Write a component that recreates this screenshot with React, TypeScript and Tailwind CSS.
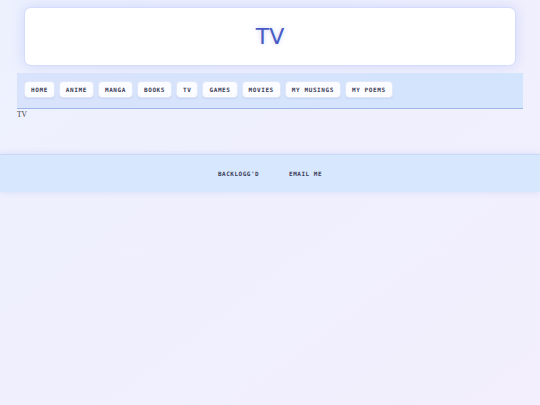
import React from "react";

const links = ["HOME", "ANIME", "MANGA", "BOOKS", "TV", "GAMES", "MOVIES", "MY MUSINGS", "MY POEMS"];

export default function App() {
  return (
    <div className="min-h-screen w-full bg-gradient-to-br from-[#edf1fe] to-[#f3effd]">
      <div className="mx-auto w-[506px] pt-[7px]">
        <header className="mx-[7px] flex h-[59px] items-center justify-center rounded-[7px] border border-[#d3dcfb] bg-white shadow-[0_0_14px_rgba(120,140,240,0.25)]">
          <h1
            className="text-[22px] leading-none text-[#4a5cc4] [text-shadow:0_0_4px_rgba(100,120,230,0.35)]"
            style={{ fontFamily: '"DejaVu Sans", sans-serif' }}
          >
            TV
          </h1>
        </header>
        <nav className="mt-[7px] flex h-[36px] items-start gap-[4px] border-b border-[#9fb7e8] bg-gradient-to-r from-[#d9e3fb] to-[#d3e4fd] px-[7px] pt-[8px]">
          {links.map((l) => (
            <a
              key={l}
              className="flex h-[17px] items-center rounded-[4px] border border-[#e0e7f8] bg-[#fbfcff] px-[6px] text-[6px] font-bold tracking-[0.6px] text-[#3b4058] shadow-[0_1px_1px_rgba(120,140,200,0.15)]"
              style={{ fontFamily: '"DejaVu Sans Mono", monospace' }}
            >
              {l}
            </a>
          ))}
        </nav>
        <div
          className="h-[45px] pt-[1px] text-[7.5px] leading-[10px] text-[#444]"
          style={{ fontFamily: '"Liberation Serif", serif' }}
        >
          TV
        </div>
      </div>
      <footer className="flex h-[38px] items-center justify-center gap-[30px] border-t border-[#cad9f5] bg-[#d7e7fe] shadow-[0_0_6px_rgba(150,170,230,0.3)]">
        {["BACKLOGG'D", "EMAIL ME"].map((l) => (
          <a
            key={l}
            className="text-[6px] font-bold tracking-[0.5px] text-[#3b4058]"
            style={{ fontFamily: '"DejaVu Sans Mono", monospace' }}
          >
            {l}
          </a>
        ))}
      </footer>
    </div>
  );
}
